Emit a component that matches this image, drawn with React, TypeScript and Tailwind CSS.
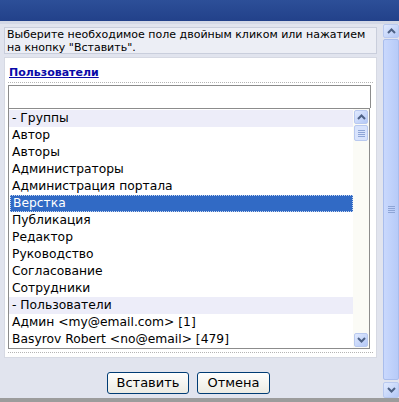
const items: { label: string; group?: boolean; selected?: boolean }[] = [
  { label: '- Группы', group: true },
  { label: 'Автор' },
  { label: 'Авторы' },
  { label: 'Администраторы' },
  { label: 'Администрация портала' },
  { label: 'Верстка', selected: true },
  { label: 'Публикация' },
  { label: 'Редактор' },
  { label: 'Руководство' },
  { label: 'Согласование' },
  { label: 'Сотрудники' },
  { label: '- Пользователи', group: true },
  { label: 'Админ <my@email.com> [1]' },
  { label: 'Basyrov Robert <no@email> [479]' },
];

function Arrow(props: { up?: boolean }) {
  return (
    <svg width="9" height="6" viewBox="0 0 9 6">
      <path
        d={props.up ? 'M1 5 L4.5 1.5 L8 5' : 'M1 1 L4.5 4.5 L8 1'}
        fill="none"
        stroke="#4d6185"
        strokeWidth="2"
      />
    </svg>
  );
}

function ScrollButton(props: { up?: boolean; className?: string }) {
  return (
    <div
      className={`flex items-center justify-center rounded-[2px] border border-[#b9c9ef] bg-gradient-to-br from-[#e1eafe] to-[#b4c8f6] ${props.className ?? ''}`}
    >
      <Arrow up={props.up} />
    </div>
  );
}

function Grip() {
  return (
    <div className="flex flex-col gap-[1px]">
      <div className="h-[1px] w-[7px] bg-[#8ea5d6]" />
      <div className="h-[1px] w-[7px] bg-[#8ea5d6]" />
      <div className="h-[1px] w-[7px] bg-[#8ea5d6]" />
      <div className="h-[1px] w-[7px] bg-[#8ea5d6]" />
    </div>
  );
}

export default function App() {
  return (
    <div className="w-[399px] h-[402px] flex flex-col overflow-hidden bg-[#e1e4ee] text-black font-['DejaVu_Sans',Verdana,sans-serif]">
      <div className="h-[21px] bg-gradient-to-b from-[#2d4f98] to-[#22418a]" />
      <div className="h-[3px] bg-[#d3d8e6]" />

      <div className="flex flex-1 min-h-0">
        <div className="w-[383px] pl-[4px] pr-[6px] pt-[3px] flex flex-col">
          <div className="h-[27px] border border-[#c9cedc] bg-[#eceef5] px-[2px] text-[11px] leading-[13px] whitespace-nowrap">
            Выберите необходимое поле двойным кликом или нажатием
            <br />
            на кнопку "Вставить".
          </div>

          <div className="mt-[3px] h-[301px] border border-[#d6d9e3] bg-white px-[3px] flex flex-col">
            <a href="#" className="mt-[8px] ml-[1px] text-[11px] font-bold leading-[14px] text-[#0a0aa8] underline">
              Пользователи
            </a>
            <div className="mt-[2px] border-b border-dotted border-[#b4b4b4]" />

            <div className="mt-[2px] mr-[2px] h-[23px] border border-b-0 border-[#8c8c8c] bg-white" />

            <div className="h-[241px] mr-[3px] border border-[#8c8c8c] flex">
              <ul className="flex-1 flex flex-col pt-[1px] text-[12.3px] leading-[17px]">
                {
                  items.map(item => (
                    <li
                      key={`list-item-${item.label}`}
                      className={
                        item.selected
                          ? 'h-[17px] pl-[3px] ml-[1px] bg-[#316ac5] text-white outline-1 outline-dotted outline-offset-[-1px] outline-[#c8d7f0]'
                          : item.group
                            ? 'h-[17px] pl-[3px] bg-[#ededf9]'
                            : 'h-[17px] pl-[3px]'
                      }
                    >
                      {item.label}
                    </li>
                  ))
                }
              </ul>
              <div className="w-[16px] bg-[#fbfbf6] flex flex-col items-center pt-[1px] pb-[1px]">
                <ScrollButton up className="w-[14px] h-[14px]" />
                <div className="mt-[1px] w-[14px] h-[16px] rounded-[2px] border border-[#b9c9ef] bg-[#d8e3fc] flex items-center justify-center">
                  <Grip />
                </div>
                <div className="flex-1" />
                <ScrollButton className="w-[14px] h-[14px]" />
              </div>
            </div>

            <div className="mt-[3px] border-b border-dotted border-[#b4b4b4]" />
          </div>

          <div className="mt-[14px] flex justify-center gap-[8px] pr-[4px]">
            <button className="w-[82px] h-[22px] rounded-[3px] border border-[#003c74] bg-gradient-to-b from-[#fefefd] to-[#ecebe3] text-[13px] leading-[20px]">
              Вставить
            </button>
            <button className="w-[73px] h-[22px] rounded-[3px] border border-[#003c74] bg-gradient-to-b from-[#fefefd] to-[#ecebe3] text-[13px] leading-[20px]">
              Отмена
            </button>
          </div>
        </div>

        <div className="w-[16px] flex flex-col pb-[4px]">
          <ScrollButton up className="w-[16px] h-[14px]" />
          <div className="mt-[1px] flex-1 rounded-[2px] border border-[#a9bdec] bg-gradient-to-r from-[#c9d8fd] to-[#b7cbf8] flex items-center justify-center">
            <Grip />
          </div>
          <ScrollButton className="mt-[2px] w-[16px] h-[16px]" />
        </div>
      </div>
      <div className="h-[4px] -mt-[4px] bg-[#9c9c9c]" />
    </div>
  );
}
